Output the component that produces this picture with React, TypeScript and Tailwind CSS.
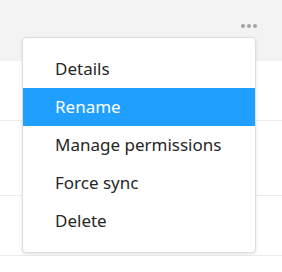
import { useState } from "react";

const items = ["Details", "Rename", "Manage permissions", "Force sync", "Delete"];

export default function App() {
  const [active, setActive] = useState(1);

  return (
    <div className="relative h-[272px] w-[282px] overflow-hidden bg-white font-['Noto_Sans',sans-serif]">
      <div className="flex h-[61px] items-start justify-end bg-[#f3f3f3] pr-[25px] pt-[24px]">
        <button type="button" className="flex gap-[2px]">
          <span className="h-[4px] w-[4px] rounded-full bg-[#a3a3a8]" />
          <span className="h-[4px] w-[4px] rounded-full bg-[#a3a3a8]" />
          <span className="h-[4px] w-[4px] rounded-full bg-[#a3a3a8]" />
        </button>
      </div>
      <div className="h-[60px] border-b border-[#ececec]" />
      <div className="h-[75px] border-b border-[#ececec]" />
      <div className="h-[60px] border-b border-[#ececec]" />

      <div className="absolute left-[22px] top-[37px] w-[234px] rounded-[4px] border border-[#dcdee2] bg-white py-[12px] shadow-[0_1px_3px_rgba(0,0,0,0.12)]">
        {items.map((item, index) => (
          <div
            key={item}
            onMouseEnter={() => setActive(index)}
            className={`flex h-[38px] items-center pl-[32px] text-[17px] font-normal ${
              active === index ? "bg-[#1f9fff] text-white" : "text-[#262626]"
            }`}
          >
            {item}
          </div>
        ))}
      </div>
    </div>
  );
}
